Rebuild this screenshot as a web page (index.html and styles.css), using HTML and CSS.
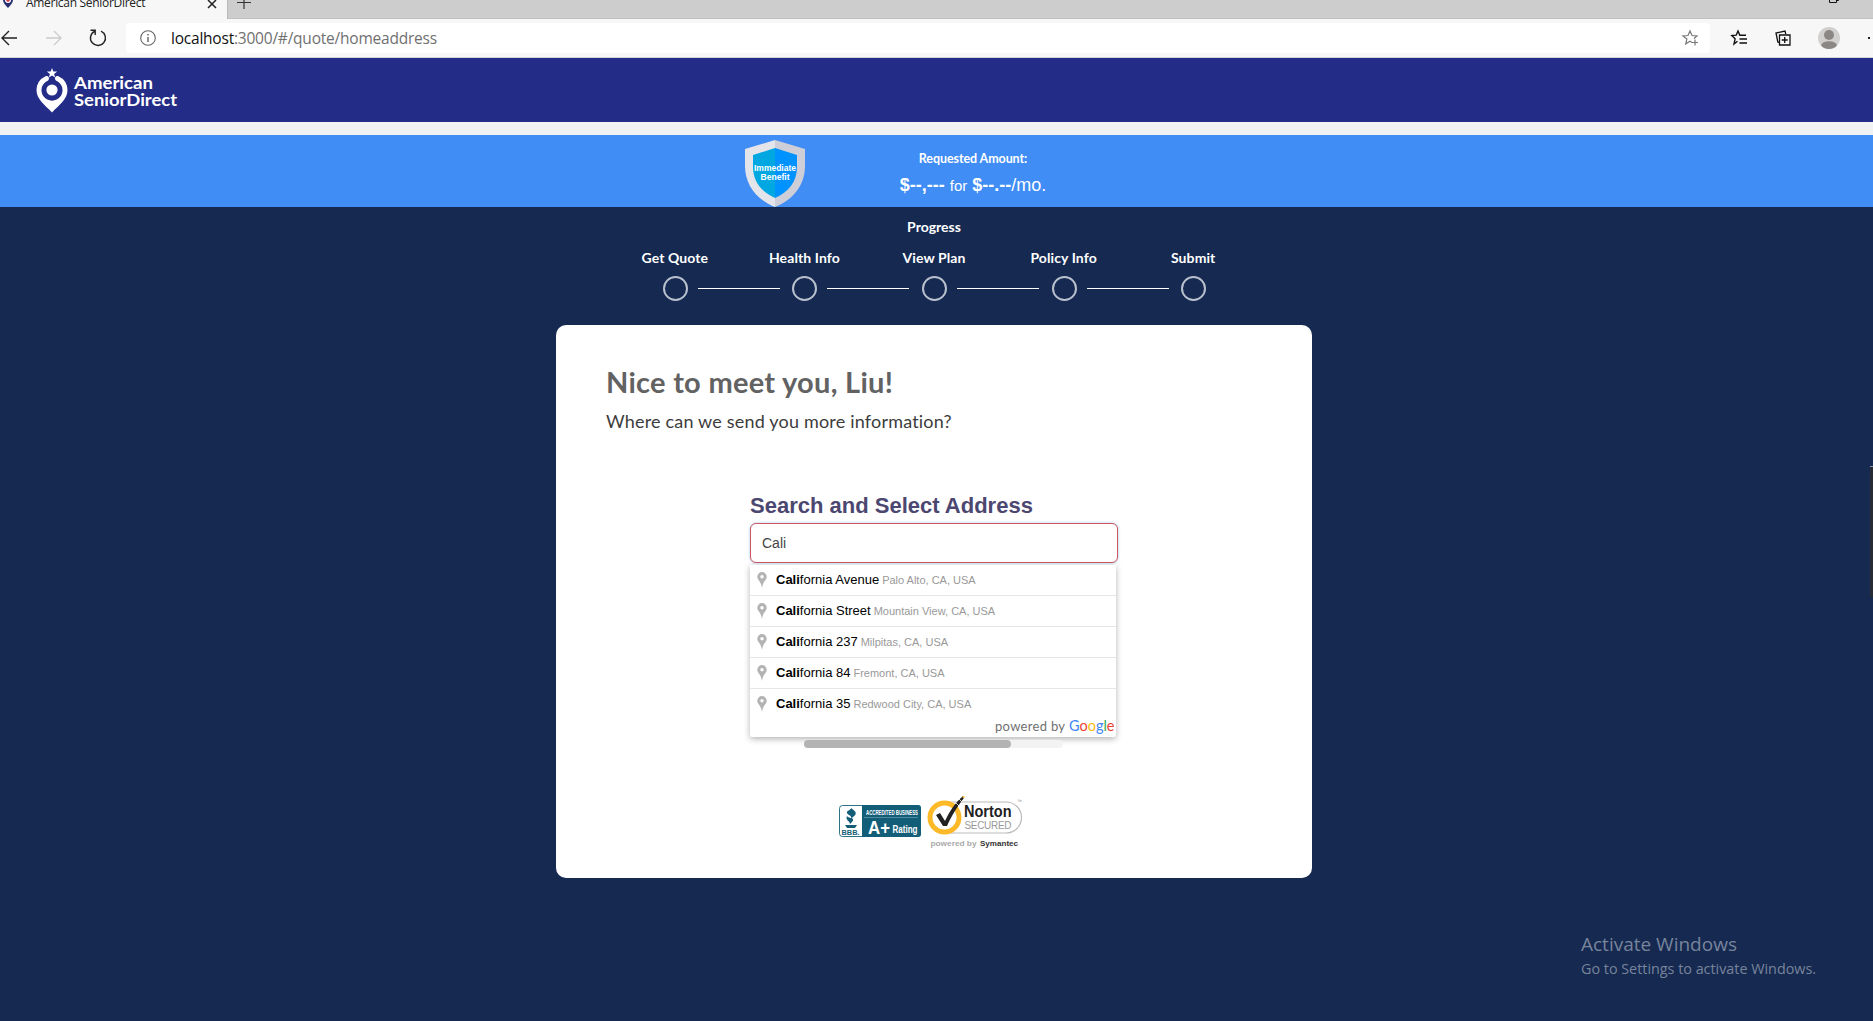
FILE: index.html
```html
<!DOCTYPE html>
<html lang="en">
<head>
<meta charset="utf-8">
<title>American SeniorDirect</title>
<link rel="stylesheet" href="styles.css">
</head>
<body>
<div class="tabstrip">
  <div class="tab">
    <svg class="favicon" width="12" height="14" viewBox="0 0 12 14"><path d="M6 0a5 5 0 0 1 5 5c0 3-2.500 5-5 8C3.500 10 1 8 1 5a5 5 0 0 1 5-5z" fill="#29306f"/><circle cx="6" cy="5" r="3" fill="#fff"/><circle cx="6" cy="5" r="1.800" fill="#d12c3d"/></svg>
    <span class="tab-title">American SeniorDirect</span>
    <svg class="tab-close" width="10" height="10" viewBox="0 0 10 10"><path d="M1 1l8 8M9 1l-8 8" stroke="#222" stroke-width="1.500"/></svg>
  </div>
  <svg class="newtab" width="14" height="14" viewBox="0 0 14 14"><path d="M7 0v14M0 7.500h14" stroke="#333" stroke-width="1.200"/></svg>
  <svg class="restore" width="10" height="4" viewBox="0 0 10 4"><path d="M.5 0v2.500h7V0M7 .5h2.500V0" fill="none" stroke="#111"/></svg>
</div>
<div class="toolbar">
  <svg class="back" width="18" height="16" viewBox="0 0 18 16"><path d="M17 8H2M9 1L2 8l7 7" fill="none" stroke="#222" stroke-width="1.400"/></svg>
  <svg class="forward" width="16" height="16" viewBox="0 0 16 16"><path d="M0 8h15M8 1l7 7-7 7" fill="none" stroke="#ccc" stroke-width="1.300"/></svg>
  <svg class="reload" width="18" height="18" viewBox="0 0 18 18"><path d="M12 2.100A7.500 7.500 0 1 1 5.500 2.300M1.500 1.200h4.700V6" fill="none" stroke="#222" stroke-width="1.400"/></svg>
  <div class="urlbar">
    <svg class="info" width="16" height="16" viewBox="0 0 16 16"><circle cx="8" cy="8" r="7.300" fill="none" stroke="#666" stroke-width="1.100"/><path d="M8 7v5M8 4v1.600" stroke="#555" stroke-width="1.300"/></svg>
    <span class="url"><b>localhost</b>:3000/#/quote/homeaddress</span>
    <svg class="addfav" width="17" height="16" viewBox="0 0 17 16"><path d="M10 12.500L8 11.300 3.700 14l1.200-5L1 5.900l5-.4L8 1l2 4.500 5 .4-3 2.600M13 9.500v6M10 12.500h6" fill="none" stroke="#777" stroke-width="1.200"/></svg>
  </div>
  <svg class="favs" width="16" height="16" viewBox="0 0 16 16"><path d="M6.500 11.200L3 14l1.100-5.200L.8 5.600l4.400-.4L7 1l1.800 4.200H15M8.500 9H16M8.500 13H16" fill="none" stroke="#111" stroke-width="1.400"/></svg>
  <svg class="collections" width="16" height="16" viewBox="0 0 16 16"><path d="M4.500 5h10.500v10H4.500zM9.700 7v6M6.700 10h6M4 12.500L2.800 12 1 3l9-2 .8 3" fill="none" stroke="#111" stroke-width="1.300"/></svg>
  <svg class="avatar" width="22" height="22" viewBox="0 0 22 22"><defs><clipPath id="face"><circle cx="11" cy="11" r="11"/></clipPath></defs><circle cx="11" cy="11" r="11" fill="#d2d0ce"/><g clip-path="url(#face)" fill="#8a8784"><circle cx="11" cy="8" r="5"/><ellipse cx="11" cy="19" rx="8" ry="4.800"/></g></svg>
  <span class="more"></span>
</div>
<header class="site-header">
  <svg class="logo" width="145" height="46" viewBox="0 0 145 46">
    <path d="M16 0l1.300 3.500 3.900.1-3.100 2.300 1.100 3.600L16 7.400l-3.200 2.100 1.100-3.600-3.100-2.300 3.900-.1z" fill="#fff"/>
    <path d="M9.500 8.200A15.700 15.700 0 0 0 .5 22c0 9 8 14.500 15.500 22.500 7.500-8 15.500-13.500 15.500-22.500A15.700 15.700 0 0 0 22.500 8.200c-3-1-4.700 2.400-2.600 4.200a10.500 10.500 0 1 1-7.800 0c2.100-1.800.4-5.200-2.600-4.200z" fill="#fff"/>
    <circle cx="16" cy="22" r="5.600" fill="#fff"/>
    <text x="38" y="21" textLength="79" lengthAdjust="spacingAndGlyphs">American</text>
    <text x="38" y="38" textLength="103" lengthAdjust="spacingAndGlyphs">SeniorDirect</text>
  </svg>
</header>
<section class="amount-bar">
  <svg class="shield" width="60" height="67" viewBox="0 0 60 67">
    <path d="M30 0L0 9v17c0 19 12 34 30 41z" fill="#e4e5ea"/><path d="M30 0l30 9v17c0 19-12 34-30 41z" fill="#cdced8"/>
    <path d="M30 8L8 15v12c0 14 8 25 22 31z" fill="#00a7e1"/><path d="M30 8l22 7v12c0 14-8 25-22 31z" fill="#0092ff"/>
    <text x="9" y="31" textLength="42" lengthAdjust="spacingAndGlyphs">Immediate</text><text x="15.500" y="39.500" textLength="29" lengthAdjust="spacingAndGlyphs">Benefit</text>
  </svg>
  <div class="amount">
    <div class="amount-label">Requested Amount:</div>
    <div class="amount-value"><b>$--,---</b> <small>for</small> <b>$--.--</b>/mo.</div>
  </div>
</section>
<main>
  <h2 class="progress-title">Progress</h2>
  <ol class="steps">
    <li><span>Get Quote</span><i></i></li>
    <li><span>Health Info</span><i></i></li>
    <li><span>View Plan</span><i></i></li>
    <li><span>Policy Info</span><i></i></li>
    <li><span>Submit</span><i></i></li>
  </ol>
  <section class="card">
    <h1>Nice to meet you, Liu!</h1>
    <p class="lead">Where can we send you more information?</p>
    <div class="search">
      <label for="address">Search and Select Address</label>
      <input id="address" type="text" value="Cali">
      <div class="suggestions">
        <div class="row"><svg width="10" height="16" viewBox="0 0 10 16"><path fill-rule="evenodd" d="M5 0a4.700 4.700 0 0 1 4.700 4.700C9.700 8 6 9 5 16 4 9 .3 8 .3 4.700A4.700 4.700 0 0 1 5 0zm0 3a1.700 1.700 0 1 0 0 3.400A1.700 1.700 0 0 0 5 3z"/></svg><span class="place"><b>Cali</b>fornia Avenue</span><span class="city">Palo Alto, CA, USA</span></div>
        <div class="row"><svg width="10" height="16" viewBox="0 0 10 16"><path fill-rule="evenodd" d="M5 0a4.700 4.700 0 0 1 4.700 4.700C9.700 8 6 9 5 16 4 9 .3 8 .3 4.700A4.700 4.700 0 0 1 5 0zm0 3a1.700 1.700 0 1 0 0 3.400A1.700 1.700 0 0 0 5 3z"/></svg><span class="place"><b>Cali</b>fornia Street</span><span class="city">Mountain View, CA, USA</span></div>
        <div class="row"><svg width="10" height="16" viewBox="0 0 10 16"><path fill-rule="evenodd" d="M5 0a4.700 4.700 0 0 1 4.700 4.700C9.700 8 6 9 5 16 4 9 .3 8 .3 4.700A4.700 4.700 0 0 1 5 0zm0 3a1.700 1.700 0 1 0 0 3.400A1.700 1.700 0 0 0 5 3z"/></svg><span class="place"><b>Cali</b>fornia 237</span><span class="city">Milpitas, CA, USA</span></div>
        <div class="row"><svg width="10" height="16" viewBox="0 0 10 16"><path fill-rule="evenodd" d="M5 0a4.700 4.700 0 0 1 4.700 4.700C9.700 8 6 9 5 16 4 9 .3 8 .3 4.700A4.700 4.700 0 0 1 5 0zm0 3a1.700 1.700 0 1 0 0 3.400A1.700 1.700 0 0 0 5 3z"/></svg><span class="place"><b>Cali</b>fornia 84</span><span class="city">Fremont, CA, USA</span></div>
        <div class="row"><svg width="10" height="16" viewBox="0 0 10 16"><path fill-rule="evenodd" d="M5 0a4.700 4.700 0 0 1 4.700 4.700C9.700 8 6 9 5 16 4 9 .3 8 .3 4.700A4.700 4.700 0 0 1 5 0zm0 3a1.700 1.700 0 1 0 0 3.400A1.700 1.700 0 0 0 5 3z"/></svg><span class="place"><b>Cali</b>fornia 35</span><span class="city">Redwood City, CA, USA</span></div>
        <svg class="powered" width="122" height="18" viewBox="0 0 122 18"><text x="1" y="13" textLength="70" fill="#707070">powered by</text><text class="google" x="75" y="13" textLength="45.500" lengthAdjust="spacingAndGlyphs"><tspan fill="#4285f4">G</tspan><tspan fill="#ea4335">o</tspan><tspan fill="#fbbc05">o</tspan><tspan fill="#4285f4">g</tspan><tspan fill="#34a853">l</tspan><tspan fill="#ea4335">e</tspan></text></svg>
      </div>
    </div>
    <div class="hscroll"><div class="thumb"></div></div>
    <div class="badges">
      <svg class="bbb-badge" width="82" height="32" viewBox="0 0 82 32">
        <rect x=".5" y=".5" width="81" height="31" rx="3" fill="#fff" stroke="#2c7185"/><path d="M23 0h56a3 3 0 0 1 3 3v26a3 3 0 0 1-3 3H23z" fill="#125e78"/>
        <path d="M12 3c6 4 6 6 2 9l-2 2c2-4-5-4-4-7 1-2 4-2 4-4zM8 11c2 3 9 1 5 6l-2 2c0-3-5-4-3-8zM6 20h12l-2 3H8z" fill="#125e78"/>
        <text class="bbb" x="2.500" y="30" textLength="18" lengthAdjust="spacingAndGlyphs">BBB.</text>
        <text class="accredited" x="27" y="9.500" textLength="52" lengthAdjust="spacingAndGlyphs">ACCREDITED BUSINESS</text>
        <path d="M25 12.500h54" stroke="#7da8b5" stroke-width=".6"/>
        <text class="grade" x="29" y="29" textLength="22" lengthAdjust="spacingAndGlyphs">A+</text>
        <text class="rating" x="53.500" y="27.500" textLength="25" lengthAdjust="spacingAndGlyphs">Rating</text>
      </svg>
      <svg width="97" height="54" viewBox="0 0 97 54">
        <path d="M22 7h57a15.500 15.500 0 0 1 0 31H22" fill="#fff" stroke="#bbb" stroke-width="1.200"/>
        <circle cx="17.500" cy="22.500" r="14.500" fill="#fff" stroke="#fdb927" stroke-width="5"/>
        <path d="M9 20l4-2 5 8C22 17 28 8 36 1l1 2C30 12 25 20 20 31h-4z" fill="#222"/><path d="M29 8l3 3M32 4l3 3" stroke="#fff" stroke-width=".8"/><circle cx="36.500" cy="2" r="1" fill="#fdb927"/>
        <text class="norton" x="37" y="22" textLength="47.500" lengthAdjust="spacingAndGlyphs">Norton</text>
        <text class="secured" x="37.500" y="33.500" textLength="47">SECURED</text>
        <text class="tm" x="90" y="8">™</text>
        <text class="sym" x="3.500" y="50.500" textLength="46" lengthAdjust="spacingAndGlyphs">powered by</text><text class="sym dark" x="53" y="50.500" textLength="38" lengthAdjust="spacingAndGlyphs">Symantec</text>
      </svg>
    </div>
  </section>
</main>
<aside class="edge-panel"></aside>
<aside class="watermark"><div class="wm-title">Activate Windows</div><div class="wm-text">Go to Settings to activate Windows.</div></aside>
</body>
</html>
```
FILE: styles.css
```css
* { box-sizing: border-box; }
body { margin: 0; width: 1873px; height: 1021px; overflow: hidden; background: #152951; font-family: "Liberation Sans", Arial, sans-serif; }
svg { display: block; flex: none; overflow: visible; }

/* browser chrome */
.tabstrip { display: flex; height: 19px; background: #cdcdcd; border-bottom: 1px solid #c0c0c0; }
.tab { display: flex; width: 228px; height: 19px; background: #f7f7f7; border-right: 1px solid #b9b9b9; }
.favicon { margin: -5px 0 0 2px; }
.tab-title { width: 181px; margin: -6px 0 0 12px; font: 12px/18px "Open Sans", sans-serif; letter-spacing: -.3px; color: #222; white-space: nowrap; }
.tab-close { margin-top: -1px; }
.newtab { margin: -5px 0 0 9px; }
.restore { margin: 0 34px 0 auto; }
.toolbar { display: flex; align-items: center; height: 39px; background: #f7f7f7; border-bottom: 1px solid #d6d6da; }
.forward { margin-left: 28px; }
.reload { margin-left: 27px; }
.urlbar { display: flex; align-items: center; width: 1584px; height: 30px; margin-left: 19px; padding: 0 11px 0 14px; background: #fff; border-radius: 4px; }
.url { margin: 0 auto 0 15px; font: 15.500px/24px "Open Sans", sans-serif; letter-spacing: -.22px; color: #707070; white-space: nowrap; }
.url b { font-weight: 400; color: #111; }
.favs { margin-left: 21px; }
.collections { margin-left: 28px; }
.avatar { margin-left: 27px; }
.more { width: 2px; height: 2px; margin-left: 28px; background: #222; }

/* site header and quote summary */
.site-header { height: 64px; padding: 10px 36px; background: #232c87; }
.logo text { font: 700 17px Lato, sans-serif; fill: #fff; }
.amount-bar { display: flex; height: 85px; padding-left: 745px; background: #3f8df5; border-top: 13px solid #f1f2f4; }
.shield { margin-top: 5px; }
.shield text { font: 700 8.500px "Liberation Sans", sans-serif; fill: #fff; }
.amount { width: 160px; margin-left: 88px; padding-top: 14px; color: #fff; text-align: center; white-space: nowrap; }
.amount-label { font: 700 12.500px/20px Lato, sans-serif; letter-spacing: -.08px; }
.amount-value { margin-top: 4px; font-size: 18px; line-height: 24px; }
.amount-value small { font-size: 15px; }

/* progress */
main { display: flex; flex-direction: column; align-items: center; padding-right: 5px; }
.progress-title { margin: 10px 0 0; font: 700 14px/20px Lato, sans-serif; color: #fff; }
.steps { display: grid; grid-template-columns: repeat(5, 129.600px); margin: 11px 0 0; padding: 0; list-style: none; color: #fff; font: 700 14px/20px Lato, sans-serif; letter-spacing: .1px; }
.steps li { display: flex; flex-direction: column; align-items: center; }
.steps i { display: grid; width: 25px; height: 25px; margin: 8px 0 0 1px; border: 2px solid #b9c0cd; border-radius: 50%; }
.steps li:not(:last-child) i::after { content: ""; align-self: center; width: 82px; height: 1px; margin-left: 33px; background: #fff; }

/* address card */
.card { width: 756px; height: 553px; margin-top: 24px; padding: 38px 50px 0; background: #fff; border-radius: 10px; }
h1 { margin: 0; font: 700 29px/38px Lato, sans-serif; letter-spacing: .28px; color: #626262; white-space: nowrap; }
.lead { margin: 7px 0 0; font: 18px/26px Lato, sans-serif; letter-spacing: .19px; color: #3c3c3c; }
.search { width: 368px; margin: 58px 0 0 144px; }
.search label { display: block; font: 700 22px/28px "Liberation Sans", sans-serif; color: #4c4770; white-space: nowrap; }
.search input { display: block; width: 368px; height: 40px; margin: 3px 0 2px; padding: 0 11px; border: 1px solid #cf5563; border-radius: 6px; outline: none; box-shadow: 0 0 3px #9bcbe5; font: 14px "Liberation Sans", sans-serif; color: #444; }
.suggestions { width: 366px; height: 172px; background: #fff; border-radius: 0 0 2px 2px; box-shadow: 0 2px 6px rgba(0,0,0,.3); }
.row { display: flex; align-items: center; height: 31px; padding-left: 7px; border-bottom: 1px solid #e6e6e6; line-height: 30px; white-space: nowrap; }
.row:nth-child(5) { height: 29px; border: 0; }
.row path { fill: #b3b3b3; }
.place { margin-left: 9px; font-size: 13px; color: #000; }
.city { margin-left: 3px; font-size: 11px; color: #999; }
.powered { margin-left: auto; }
.powered text { font: 13px Lato, sans-serif; }
.powered .google { font-size: 15px; }
.hscroll { width: 259px; height: 8px; margin: 3px 0 0 198px; background: #f3f3f3; border-radius: 4px; }
.thumb { width: 207px; height: 8px; background: #b3b3b3; border-radius: 4px; }

/* trust badges */
.badges { display: flex; align-items: flex-start; gap: 6px; margin: 47px 0 0 233px; }
.bbb-badge { margin-top: 10px; }
.bbb { font: 700 8px "Liberation Sans", sans-serif; fill: #125e78; }
.accredited { font: 700 7px "Liberation Sans", sans-serif; fill: #fff; }
.grade { font: 700 18px "Liberation Sans", sans-serif; fill: #fff; }
.rating { font: 700 10px "Liberation Sans", sans-serif; fill: #fff; }
.norton { font: 700 16px "Liberation Sans", sans-serif; fill: #222; }
.secured { font: 10px "Liberation Sans", sans-serif; fill: #999; }
.tm { font: 5px "Liberation Sans", sans-serif; fill: #999; }
.sym { font: 700 8px "Liberation Sans", sans-serif; fill: #aaa; }
.sym.dark { fill: #333; }

/* desktop overlays */
.edge-panel { position: absolute; left: 1870px; top: 466px; width: 3px; height: 131px; background: #262b36; border-top: 1px solid #8a93a5; }
.watermark { position: absolute; left: 1581px; top: 930px; color: #78849b; font-family: "Open Sans", sans-serif; white-space: nowrap; }
.wm-title { font-size: 19px; line-height: 29px; }
.wm-text { font-size: 14.350px; line-height: 20px; }
```
